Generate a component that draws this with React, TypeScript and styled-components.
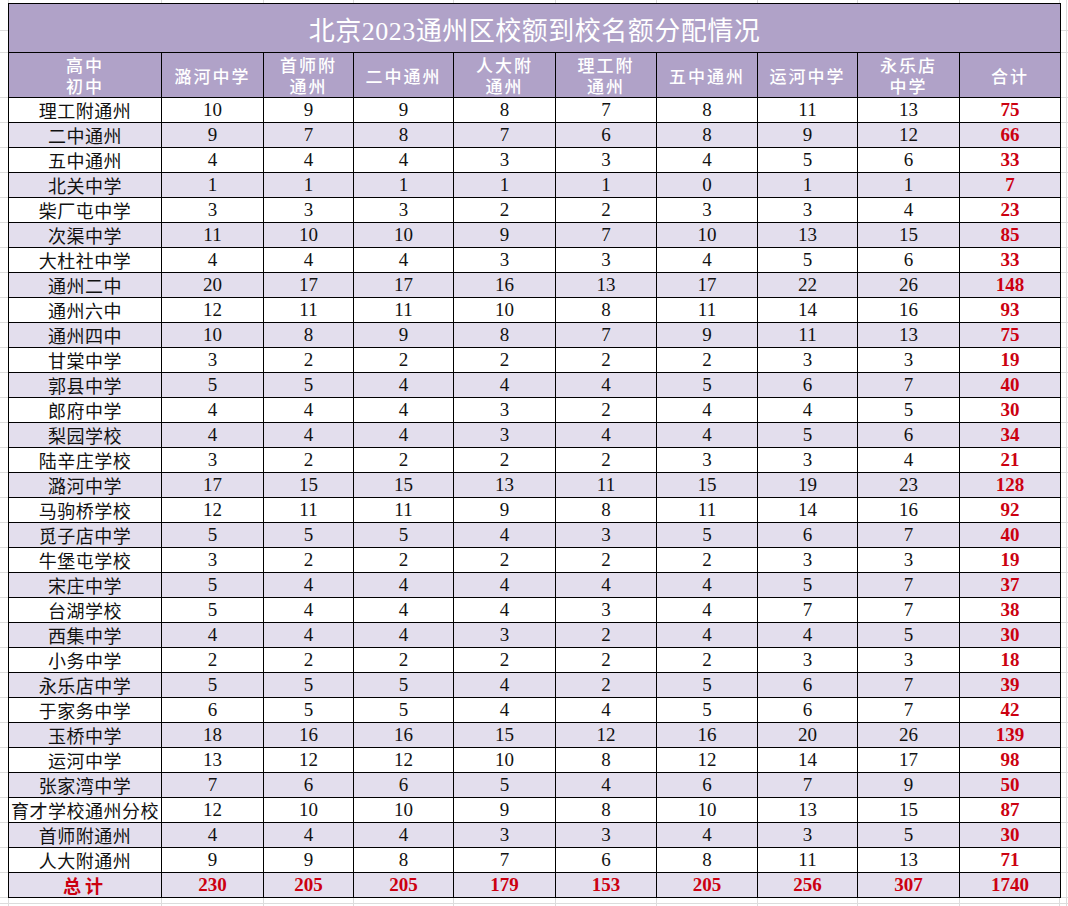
import React from "react";
import styled, { createGlobalStyle } from "styled-components";

const GlobalStyle = createGlobalStyle`
  html, body { margin: 0; padding: 0; background: #ffffff; }
  body { width: 1068px; height: 906px; overflow: hidden; }
`;

const colEdges = [8, 161, 263, 353, 453, 555, 656, 757, 857, 959, 1059, 1066];
const rowEdges: number[] = [30, 52];
for (let y = 97; y < 906; y += 25) rowEdges.push(y);
rowEdges.push(903);

const gridBg = [
  ...colEdges.map((x) => `linear-gradient(#dcdcdc, #dcdcdc) ${x}px 0 / 1px 100% no-repeat`),
  ...rowEdges.map((y) => `linear-gradient(#dcdcdc, #dcdcdc) 0 ${y}px / 100% 1px no-repeat`),
].join(", ");

const Sheet = styled.div`
  width: 1068px;
  height: 906px;
  box-sizing: border-box;
  padding: 3px 0 0 8px;
  background: ${gridBg}, #ffffff;
`;

const Table = styled.table`
  border-collapse: collapse;
  table-layout: fixed;
  width: 1052px;
  background: #ffffff;
  font-family: "Liberation Serif", "Noto Sans CJK SC", serif;
  color: #000000;
`;

const TitleCell = styled.th`
  height: 48px;
  padding: 0;
  background: #b0a2c8;
  border: 1.5px solid #000000;
  color: #ffffff;
  font-family: "Liberation Serif", "Noto Sans CJK SC", serif;
  font-size: 26px;
  font-weight: 400;
  text-align: center;
  vertical-align: middle;
  letter-spacing: 0.5px;
`;

const HeadCell = styled.th`
  height: 44px;
  padding: 0;
  background: #b0a2c8;
  border: 1px solid #000000;
  color: #ffffff;
  font-family: "Noto Sans CJK SC", sans-serif;
  font-size: 17px;
  font-weight: 500;
  line-height: 22px;
  letter-spacing: 2px;
  text-align: center;
  vertical-align: middle;
`;

const HeadLine = styled.div`
  height: 21px;
  line-height: 21px;
  overflow: visible;
`;

const Row = styled.tr<{ $alt: boolean }>`
  height: 25px;
  background: ${(p) => (p.$alt ? "#e3deed" : "#ffffff")};
`;

const NameCell = styled.td<{ $total?: boolean }>`
  padding: 0;
  border: 1px solid #000000;
  font-family: "Noto Sans CJK SC", sans-serif;
  font-size: 18px;
  line-height: 22px;
  letter-spacing: ${(p) => (p.$total ? "4px" : "0.5px")};
  font-weight: ${(p) => (p.$total ? 700 : 400)};
  color: ${(p) => (p.$total ? "#cc0010" : "#111111")};
  text-align: center;
  vertical-align: middle;
  white-space: nowrap;
`;

const NumCell = styled.td<{ $red?: boolean }>`
  padding: 0;
  border: 1px solid #000000;
  font-family: "Liberation Serif", serif;
  font-size: 19px;
  line-height: 22px;
  font-weight: ${(p) => (p.$red ? 700 : 400)};
  color: ${(p) => (p.$red ? "#cc0010" : "#111111")};
  text-align: center;
  vertical-align: middle;
`;

const widths = [153, 102, 90, 100, 102, 101, 101, 100, 102, 101];

const headers: string[][] = [
  ["高中", "初中"],
  ["潞河中学"],
  ["首师附", "通州"],
  ["二中通州"],
  ["人大附", "通州"],
  ["理工附", "通州"],
  ["五中通州"],
  ["运河中学"],
  ["永乐店", "中学"],
  ["合计"],
];

const data: [string, number[]][] = [
  ["理工附通州", [10, 9, 9, 8, 7, 8, 11, 13, 75]],
  ["二中通州", [9, 7, 8, 7, 6, 8, 9, 12, 66]],
  ["五中通州", [4, 4, 4, 3, 3, 4, 5, 6, 33]],
  ["北关中学", [1, 1, 1, 1, 1, 0, 1, 1, 7]],
  ["柴厂屯中学", [3, 3, 3, 2, 2, 3, 3, 4, 23]],
  ["次渠中学", [11, 10, 10, 9, 7, 10, 13, 15, 85]],
  ["大杜社中学", [4, 4, 4, 3, 3, 4, 5, 6, 33]],
  ["通州二中", [20, 17, 17, 16, 13, 17, 22, 26, 148]],
  ["通州六中", [12, 11, 11, 10, 8, 11, 14, 16, 93]],
  ["通州四中", [10, 8, 9, 8, 7, 9, 11, 13, 75]],
  ["甘棠中学", [3, 2, 2, 2, 2, 2, 3, 3, 19]],
  ["郭县中学", [5, 5, 4, 4, 4, 5, 6, 7, 40]],
  ["郎府中学", [4, 4, 4, 3, 2, 4, 4, 5, 30]],
  ["梨园学校", [4, 4, 4, 3, 4, 4, 5, 6, 34]],
  ["陆辛庄学校", [3, 2, 2, 2, 2, 3, 3, 4, 21]],
  ["潞河中学", [17, 15, 15, 13, 11, 15, 19, 23, 128]],
  ["马驹桥学校", [12, 11, 11, 9, 8, 11, 14, 16, 92]],
  ["觅子店中学", [5, 5, 5, 4, 3, 5, 6, 7, 40]],
  ["牛堡屯学校", [3, 2, 2, 2, 2, 2, 3, 3, 19]],
  ["宋庄中学", [5, 4, 4, 4, 4, 4, 5, 7, 37]],
  ["台湖学校", [5, 4, 4, 4, 3, 4, 7, 7, 38]],
  ["西集中学", [4, 4, 4, 3, 2, 4, 4, 5, 30]],
  ["小务中学", [2, 2, 2, 2, 2, 2, 3, 3, 18]],
  ["永乐店中学", [5, 5, 5, 4, 2, 5, 6, 7, 39]],
  ["于家务中学", [6, 5, 5, 4, 4, 5, 6, 7, 42]],
  ["玉桥中学", [18, 16, 16, 15, 12, 16, 20, 26, 139]],
  ["运河中学", [13, 12, 12, 10, 8, 12, 14, 17, 98]],
  ["张家湾中学", [7, 6, 6, 5, 4, 6, 7, 9, 50]],
  ["育才学校通州分校", [12, 10, 10, 9, 8, 10, 13, 15, 87]],
  ["首师附通州", [4, 4, 4, 3, 3, 4, 3, 5, 30]],
  ["人大附通州", [9, 9, 8, 7, 6, 8, 11, 13, 71]],
];

const totals = [230, 205, 205, 179, 153, 205, 256, 307, 1740];

export default function App() {
  return (
    <>
      <GlobalStyle />
      <Sheet>
        <Table>
          <colgroup>
            {widths.map((w, i) => (
              <col key={i} style={{ width: w }} />
            ))}
          </colgroup>
          <thead>
            <tr>
              <TitleCell colSpan={10}>北京2023通州区校额到校名额分配情况</TitleCell>
            </tr>
            <tr>
              {headers.map((lines, i) => (
                <HeadCell key={i}>
                  {lines.map((l, j) => (
                    <HeadLine key={j}>{l}</HeadLine>
                  ))}
                </HeadCell>
              ))}
            </tr>
          </thead>
          <tbody>
            {data.map(([name, nums], r) => (
              <Row key={name + r} $alt={r % 2 === 1}>
                <NameCell>{name}</NameCell>
                {nums.map((n, c) => (
                  <NumCell key={c} $red={c === nums.length - 1}>
                    {n}
                  </NumCell>
                ))}
              </Row>
            ))}
            <Row $alt={true}>
              <NameCell $total>总计</NameCell>
              {totals.map((n, c) => (
                <NumCell key={c} $red>
                  {n}
                </NumCell>
              ))}
            </Row>
          </tbody>
        </Table>
      </Sheet>
    </>
  );
}
